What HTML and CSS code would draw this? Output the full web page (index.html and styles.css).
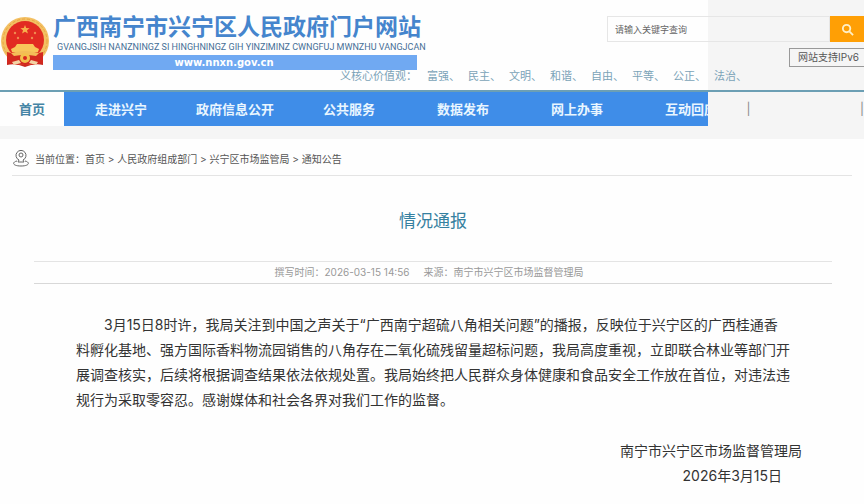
FILE: index.html
```html
<!DOCTYPE html>
<html lang="zh-CN">
<head>
  <meta charset="UTF-8">
  <title>情况通报</title>
  <link rel="stylesheet" href="styles.css">
</head>
<body>

  <!-- Header -->
  <div class="top">
  <header class="header">
    <a class="brand" href="#">
      <svg class="emblem" viewBox="0 0 50 52">
        <path d="M7 36 L43 36 L43 49 Q34 47 25 51 Q16 47 7 49 Z" fill="#c9281f"/>
        <circle cx="25" cy="25" r="24" fill="#f3c063"/>
        <circle cx="25" cy="25" r="22" fill="none" stroke="#e9a640" stroke-dasharray="3 2"/>
        <circle cx="25" cy="24" r="19" fill="#e22b22"/>
        <path d="M25 9 l1.2 3 3.4 .2 -2.6 2.1 .9 3.3 -2.9 -1.9 -2.9 1.9 .9 -3.3 -2.6 -2.1 3.4 -.2z" fill="#f7b04c"/>
        <g fill="#f08a50">
          <circle cx="15" cy="17" r="1.2"/><circle cx="18" cy="22" r="1.2"/>
          <circle cx="32" cy="22" r="1.2"/><circle cx="35" cy="17" r="1.2"/>
        </g>
        <path d="M17 28 L33 28 L35 31 L39 33 L38 36 L12 36 L11 33 L15 31 Z" fill="#f8c75a"/>
        <path d="M7 36 Q25 42 43 36 L43 47 Q25 51 7 47 Z" fill="#d3281f"/>
        <path d="M11 37 Q25 33 39 37 L36 40 Q25 38 14 40 Z" fill="#f3bd58"/>
        <circle cx="25" cy="42" r="5" fill="#f3c04c"/>
        <circle cx="25" cy="42" r="2" fill="#d8281f"/>
        <path d="M12 46 l7 -2 2 3 -7 2z M38 46 l-7 -2 -2 3 7 2z" fill="#f3d3a4"/>
      </svg>
      <span class="brand-text">
        <strong class="brand-name">广西南宁市兴宁区人民政府门户网站</strong>
        <span class="brand-latin">GVANGJSIH NANZNINGZ SI HINGHNINGZ GIH YINZIMINZ CWNGFUJ MWNZHU VANGJCAN</span>
        <span class="brand-url">www.nnxn.gov.cn</span>
      </span>
    </a>
    <div class="tools">
      <form class="search">
        <input type="text" placeholder="请输入关键字查询" aria-label="请输入关键字查询">
        <button type="submit" aria-label="搜索">
          <svg viewBox="0 0 14 14"><circle cx="6" cy="6" r="4" /><path d="M9 9 L13 13"/></svg>
        </button>
      </form>
      <a class="ipv6" href="#">网站支持IPv6</a>
    </div>
  </header>

  <div class="values">
    <span class="values-title">义核心价值观：</span>
    <span>富强、</span>
    <span>民主、</span>
    <span>文明、</span>
    <span>和谐、</span>
    <span>自由、</span>
    <span>平等、</span>
    <span>公正、</span>
    <span>法治、</span>
  </div>

  <!-- Navigation -->
  <nav class="nav">
    <div class="nav-main">
      <a class="active" href="#">首页</a>
      <a href="#">走进兴宁</a>
      <a href="#">政府信息公开</a>
      <a href="#">公共服务</a>
      <a href="#">数据发布</a>
      <a href="#">网上办事</a>
      <a href="#">互动回应</a>
    </div>
    <div class="nav-rest"><span>|</span><span>|</span></div>
  </nav>
  </div>

  <!-- Breadcrumb -->
  <div class="crumb-bar">
    <div class="crumbs">
      <svg class="pin" viewBox="0 0 18 18">
        <circle cx="9" cy="5" r="2"/>
        <path d="M6 12 L7 10 A5 5 0 1 1 11 10 L12 12 Z"/>
        <path d="M5 11 C0 12 0 16 9 16 S18 12 13 11"/>
      </svg>
      <p>当前位置：<a href="#">首页</a> &gt; <a href="#">人民政府组成部门</a> &gt; <a href="#">兴宁区市场监管局</a> &gt; <a href="#">通知公告</a></p>
    </div>
  </div>

  <!-- Article -->
  <main class="article">
    <h1>情况通报</h1>
    <div class="meta">
      <span>撰写时间：2026-03-15 14:56</span>
      <span>来源：南宁市兴宁区市场监督管理局</span>
    </div>
    <div class="content">
      <p>3月15日8时许，我局关注到中国之声关于“广西南宁超硫八角相关问题”的播报，反映位于兴宁区的广西桂通香料孵化基地、强方国际香料物流园销售的八角存在二氧化硫残留量超标问题，我局高度重视，立即联合林业等部门开展调查核实，后续将根据调查结果依法依规处置。我局始终把人民群众身体健康和食品安全工作放在首位，对违法违规行为采取零容忍。感谢媒体和社会各界对我们工作的监督。</p>
    </div>
    <div class="sign">
      <p>南宁市兴宁区市场监督管理局</p>
      <p class="sign-date">2026年3月15日</p>
    </div>
  </main>

</body>
</html>
```
FILE: styles.css
```css
* {
  box-sizing: border-box;
}
body {
  margin: 0;
  font-family: Inter, "Noto Sans CJK SC", sans-serif;
  font-size: 14px;
  color: #333;
  background: #fefefe;
}
a {
  color: inherit;
  text-decoration: none;
}
p {
  margin: 0;
}

/* header */
.top {
  background: linear-gradient(to right, #fefefe 82%, #f5f5f5 82%);
}
.header {
  display: flex;
  justify-content: space-between;
  height: 70px;
  padding-top: 16px;
}
.brand {
  display: flex;
  gap: 3px;
}
.emblem {
  width: 50px;
  height: 52px;
}
.brand-text {
  display: flex;
  flex-direction: column;
  width: 364px;
  white-space: nowrap;
}
.brand-name {
  font-size: 23px;
  line-height: 23px;
  color: #4585cd;
}
.brand-latin {
  font-family: Roboto, sans-serif;
  font-size: 9px;
  line-height: 16px;
  padding-left: 4px;
  color: #466f96;
}
.brand-url {
  padding-right: 22px;
  line-height: 15px;
  text-align: center;
  font-family: "DejaVu Sans", sans-serif;
  font-size: 10px;
  font-weight: bold;
  color: #fff;
  background: #70a9f2;
}
.tools {
  display: flex;
  flex-direction: column;
  align-items: flex-end;
  gap: 6px;
}
.search {
  display: flex;
  width: 257px;
  height: 26px;
}
.search input {
  flex: 1;
  min-width: 0;
  padding: 0 7px;
  border: 1px solid #e6e6e6;
  background: transparent;
  font: inherit;
  font-size: 9px;
}
.search input::placeholder {
  color: #666;
}
.search button {
  width: 34px;
  padding: 0;
  border: 0;
  background: #ff9f05;
}
.search svg {
  display: block;
  width: 13px;
  height: 13px;
  margin: 0 auto;
  fill: none;
  stroke: #fff0c8;
  stroke-width: 2;
}
.ipv6 {
  padding: 0 5px 0 8px;
  border: 1px solid #999;
  border-right: 0;
  font-size: 10px;
  line-height: 17px;
  color: #555;
}
.values {
  display: flex;
  gap: 8px;
  height: 20px;
  padding-left: 340px;
  font-size: 11px;
  line-height: 13px;
  white-space: nowrap;
  color: #7ba3b8;
}
.values-title {
  margin-right: 2px;
}

/* navigation */
.nav {
  display: flex;
  border-top: 2px solid #6c9fb4;
}
.nav-main {
  display: flex;
  width: 82%;
  overflow: hidden;
  background: #3f8de8;
}
.nav a {
  flex: 0 0 114px;
  text-align: center;
  font-size: 13px;
  font-weight: bold;
  line-height: 34px;
  color: #e9f6ff;
}
.nav a.active {
  flex-basis: 64px;
  color: #4585a5;
  background: #fefefe;
}
.nav-rest {
  flex: 1;
  display: flex;
  justify-content: space-between;
  padding-left: 38px;
  line-height: 34px;
  font-size: 12px;
  color: #888;
}

/* breadcrumb */
.crumb-bar {
  padding: 0 12px;
  background: linear-gradient(#f5f5f5 13px, #fefefe 13px);
}
.crumbs {
  display: flex;
  align-items: center;
  gap: 5px;
  height: 50px;
  padding-top: 16px;
  border-bottom: 1px solid #e4e4e4;
  font-size: 10px;
  color: #555;
}
.pin {
  width: 18px;
  height: 18px;
  fill: none;
  stroke: #666;
}

/* article */
.article {
  padding: 32px 32px 0 34px;
}
h1 {
  margin: 0 0 27px;
  text-align: center;
  font-size: 17px;
  font-weight: normal;
  line-height: 26px;
  color: #3580a0;
}
.meta {
  display: flex;
  justify-content: center;
  gap: 14px;
  padding-right: 8px;
  border-top: 1px solid #e4e4e4;
  border-bottom: 1px solid #d8d8d8;
  font-size: 10px;
  line-height: 21px;
  color: #999;
}
.content {
  width: 51em;
  max-width: 100%;
  margin: 28px auto 0;
  line-height: 25px;
  text-indent: 2em;
}
.sign {
  padding: 26px 30px 0 0;
  line-height: 25px;
  text-align: right;
}
.sign-date {
  padding-right: 20px;
}
```
